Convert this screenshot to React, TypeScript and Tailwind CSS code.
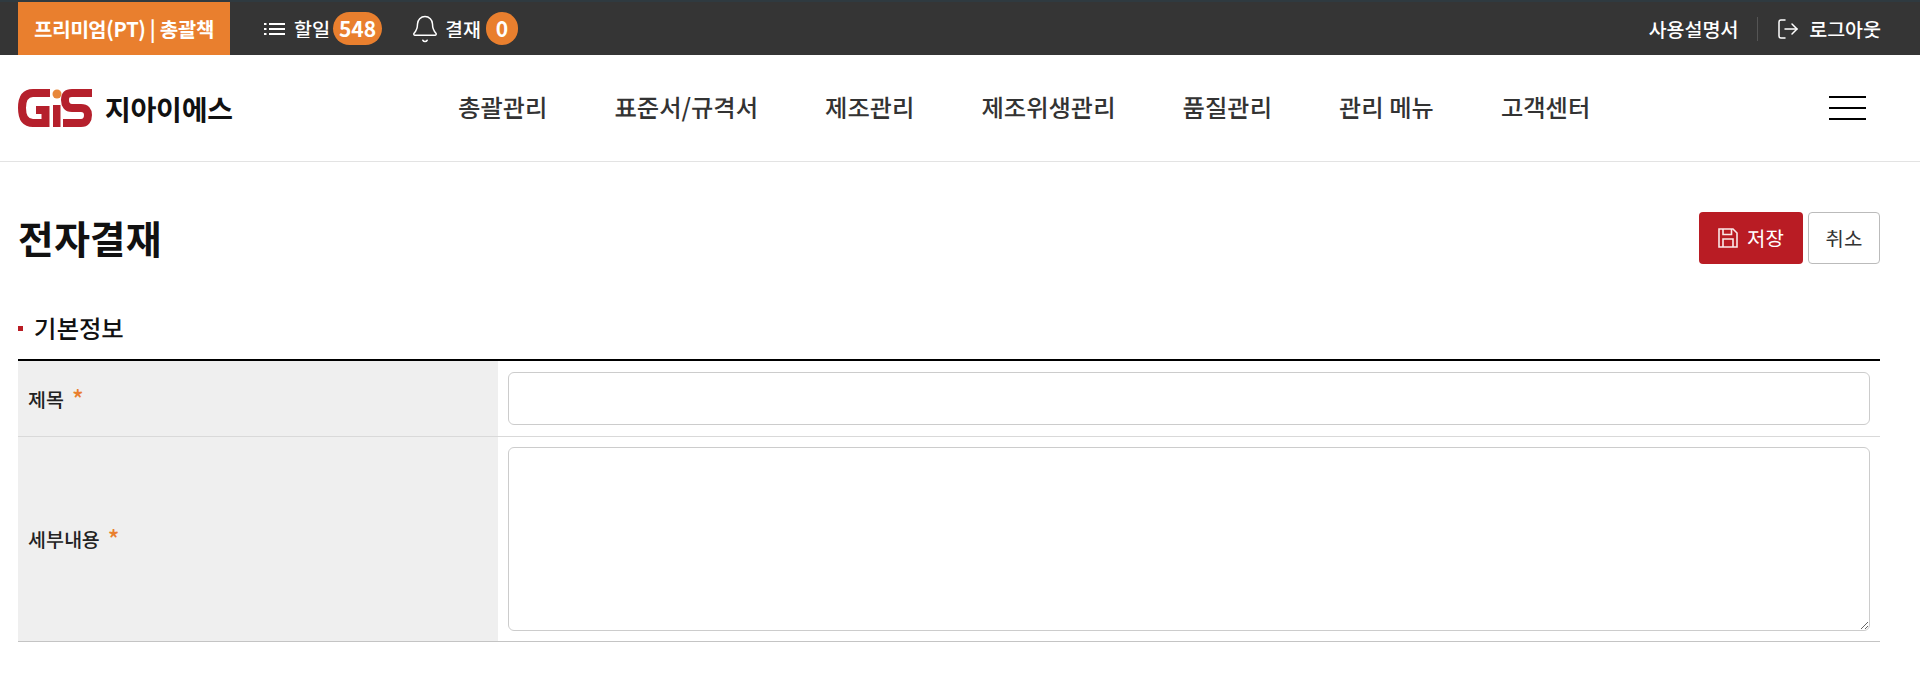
import React from "react";
import { Bell, LogOut } from "lucide-react";

const menus = ["총괄관리", "표준서/규격서", "제조관리", "제조위생관리", "품질관리", "관리 메뉴", "고객센터"];

function Logo() {
  return (
    <svg width="74" height="38" viewBox="0 0 74 38" fill="none" className="shrink-0">
      <path d="M32 4 H15 C7 4 4 10 4 19 C4 28 7 34 15 34 H27.5 V21 H18" stroke="#b5202c" strokeWidth="8" />
      <rect x="35" y="16" width="7.5" height="22" fill="#b5202c" />
      <circle cx="39" cy="5" r="4.5" fill="#e8873a" />
      <path d="M74 4 H54 C48.5 4 47 7 47 11 C47 15.5 49 19 54 19 H63 C68 19 70 22 70 26 C70 30.5 68 34 63 34 H45" stroke="#b5202c" strokeWidth="8" />
    </svg>
  );
}

function Badge({ children }: { children: React.ReactNode }) {
  return (
    <span className="flex h-[33px] min-w-[32px] items-center justify-center rounded-full bg-[#e97f2e] px-[6px] text-[21px] font-bold text-white">
      {children}
    </span>
  );
}

function ListIcon() {
  return (
    <svg width="22" height="14" viewBox="0 0 22 14" fill="none" stroke="white" strokeWidth="2">
      <path d="M0 2h2.5M0 7h2.5M0 12h2.5M5 2h16M5 7h16M5 12h16" />
    </svg>
  );
}

function SaveIcon() {
  return (
    <svg width="20" height="20" viewBox="0 0 20 20" fill="none" stroke="#fbe9e9" strokeWidth="1.6">
      <path d="M1 1 H15 L19 5 V19 H1 Z" />
      <path d="M5 1 V6.5 H13.5 V1" />
      <path d="M5 19 V11 H15 V19" />
    </svg>
  );
}

export default function App() {
  return (
    <div className="min-h-[679px] bg-white font-['Noto_Sans_KR','Noto_Sans_CJK_KR',sans-serif] text-[#222]">
      <div className="flex h-[55px] items-stretch justify-between border-t-2 border-[#2f3a40] bg-[#353535] pl-[18px] pr-[39px] text-white">
        <div className="flex items-stretch">
          <div className="flex w-[212px] items-center justify-center bg-[#e97f2e] text-[20px] font-bold tracking-[-0.3px]">프리미엄(PT) | 총괄책</div>
          <div className="ml-[34px] flex items-center text-[19.5px] font-medium">
            <ListIcon />
            <span className="ml-[8px] mr-[3px]">할일</span>
            <Badge>548</Badge>
          </div>
          <div className="ml-[28px] flex items-center gap-[5px] text-[19.5px] font-medium">
            <Bell size={30} strokeWidth={1.2} />
            <span>결재</span>
            <Badge>0</Badge>
          </div>
        </div>
        <div className="flex items-center text-[19.5px] font-medium">
          <span>사용설명서</span>
          <span className="ml-[19px] mr-[18px] h-[24px] w-px bg-[#555]" />
          <LogOut size={24} strokeWidth={1.5} className="mr-[9px]" />
          <span>로그아웃</span>
        </div>
      </div>

      <header className="flex h-[107px] items-center border-b border-[#e3e3e3] pl-[18px] pr-[54px]">
        <div className="flex w-[440px] items-center gap-[13px]">
          <Logo />
          <span className="text-[28px] font-bold leading-none tracking-[-0.2px] text-[#111]">지아이에스</span>
        </div>
        <nav className="flex items-center gap-[67px] pb-[2px] text-[24.3px] font-medium text-[#333]">
          {menus.map((m) => (
            <span key={m}>{m}</span>
          ))}
        </nav>
        <div className="ml-auto flex h-[24px] w-[37px] flex-col justify-between">
          <span className="h-[2px] bg-black" />
          <span className="h-[2px] bg-black" />
          <span className="h-[2px] bg-black" />
        </div>
      </header>

      <main className="pl-[18px] pr-[40px]">
        <div className="flex items-start justify-between pt-[50px]">
          <h1 className="text-[39px] font-bold leading-[50px] text-[#111]">전자결재</h1>
          <div className="flex gap-[5px]">
            <button className="flex h-[52px] w-[104px] items-center justify-center gap-[9px] rounded-[4px] bg-[#b91c24] text-[20px] text-white">
              <SaveIcon />
              저장
            </button>
            <button className="h-[52px] w-[72px] rounded-[4px] border border-[#bbb] bg-white text-[20px] text-[#333]">취소</button>
          </div>
        </div>

        <div className="mt-[47px] flex items-center gap-[11px]">
          <span className="h-[5px] w-[5px] bg-[#b91c24]" />
          <h2 className="text-[24.4px] font-medium leading-[34px] text-[#111]">기본정보</h2>
        </div>

        <div className="mt-[14px] border-t-2 border-black">
          <div className="flex h-[76px] border-b border-[#d9d9d9]">
            <div className="flex w-[480px] items-center gap-[8px] bg-[#efefef] pl-[10px] text-[19.5px] font-medium">
              제목 <span className="text-[24px] leading-none text-[#e97f2e]">*</span>
            </div>
            <div className="flex flex-1 items-center px-[10px]">
              <input className="h-[53px] w-full rounded-[6px] border border-[#ccc] bg-white" />
            </div>
          </div>
          <div className="flex h-[205px] border-b border-[#c4c4c4]">
            <div className="flex w-[480px] items-center gap-[8px] bg-[#efefef] pl-[10px] text-[19.5px] font-medium">
              세부내용 <span className="text-[24px] leading-none text-[#e97f2e]">*</span>
            </div>
            <div className="flex flex-1 items-center px-[10px]">
              <textarea className="h-[184px] w-full rounded-[6px] border border-[#ccc] bg-white" />
            </div>
          </div>
        </div>
      </main>
    </div>
  );
}
